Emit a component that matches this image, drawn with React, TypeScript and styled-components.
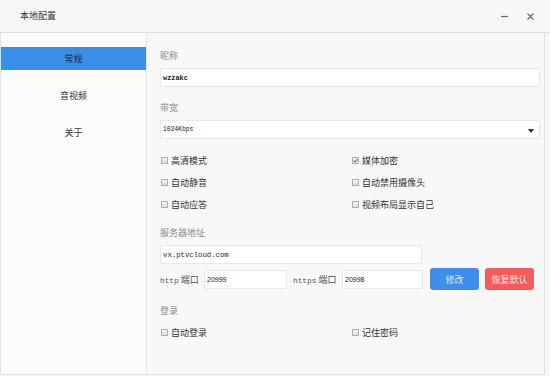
import React from 'react';
import styled, { createGlobalStyle } from 'styled-components';

const Global = createGlobalStyle`
  *, *::before, *::after { box-sizing: border-box; }
  html, body { margin: 0; padding: 0; background: #f7f7f7; }
  body { font-family: "Noto Sans CJK SC", "Liberation Sans", sans-serif; }
`;

const Window = styled.div`
  width: 550px;
  height: 376px;
  display: flex;
  flex-direction: column;
  background: #f7f7f7;
  overflow: hidden;
`;

const TitleBar = styled.div`
  height: 33px;
  flex: none;
  border-bottom: 1px solid #e0e0e0;
  display: flex;
  align-items: center;
  justify-content: space-between;
  padding: 0 16px 0 20px;
  background: #f7f7f7;
`;

const Title = styled.div`
  font-size: 9px;
  color: #333;
  line-height: 12px;
`;

const Controls = styled.div`
  display: flex;
  align-items: center;
  gap: 19px;
  svg { display: block; }
`;

const Body = styled.div`
  width: 545px;
  height: 342px;
  flex: none;
  display: flex;
  border: 1px solid #e2e2e2;
  border-top: none;
`;

const Sidebar = styled.div`
  width: 146px;
  flex: none;
  background: #fcfcfc;
  border-right: 1px solid #e6e6e6;
  padding-top: 14px;
  display: flex;
  flex-direction: column;
  gap: 14px;
`;

const NavItem = styled.div<{ $active?: boolean }>`
  height: 23px;
  line-height: 23px;
  text-align: center;
  font-size: 9px;
  color: ${(p) => (p.$active ? '#1b2a40' : '#333')};
  background: ${(p) => (p.$active ? '#3b8ee8' : 'transparent')};
`;

const Content = styled.div`
  flex: 1;
  background: #f8f8f8;
  padding: 16px 4px 0 13px;
  display: flex;
  flex-direction: column;
`;

const Label = styled.div<{ $mt?: number }>`
  height: 14px;
  line-height: 14px;
  font-size: 9px;
  color: #8a8a8a;
  margin-top: ${(p) => p.$mt ?? 0}px;
  margin-bottom: 5px;
`;

const TextBox = styled.div<{ $width?: number; $size?: number; $bold?: boolean; $sans?: boolean }>`
  height: 19px;
  width: ${(p) => (p.$width ? `${p.$width}px` : '100%')};
  flex: none;
  background: #fff;
  border: 1px solid #e8e8e8;
  border-radius: 2px;
  padding: 0 2px;
  display: flex;
  align-items: center;
  font-family: ${(p) => (p.$sans ? '"Liberation Sans", Arial, sans-serif' : '"Liberation Mono", monospace')};
  font-size: ${(p) => p.$size ?? 7}px;
  font-weight: ${(p) => (p.$bold ? 700 : 400)};
  color: #222;
  position: relative;
`;

const Caret = styled.span`
  position: absolute;
  right: 5px;
  top: 8px;
  width: 0;
  height: 0;
  border-left: 3.5px solid transparent;
  border-right: 3.5px solid transparent;
  border-top: 4px solid #333;
`;

const CheckGrid = styled.div<{ $mt?: number }>`
  display: grid;
  grid-template-columns: 191px 1fr;
  grid-auto-rows: 22px;
  margin-top: ${(p) => p.$mt ?? 0}px;
`;

const CheckItem = styled.label`
  display: flex;
  align-items: center;
  gap: 3px;
  font-size: 9px;
  color: #333;
  padding-left: 1px;
`;

const Box = styled.span`
  width: 7px;
  height: 7px;
  flex: none;
  border: 1px solid #b0b0b0;
  background: linear-gradient(#f6f6f6, #dcdcdc);
  display: flex;
  align-items: center;
  justify-content: center;
  svg { display: block; }
`;

const PortRow = styled.div`
  display: flex;
  align-items: center;
  height: 22px;
  margin-top: 4px;
`;

const PortLabel = styled.div<{ $width: number }>`
  width: ${(p) => p.$width}px;
  flex: none;
  font-size: 9px;
  color: #555;
  white-space: nowrap;
  span { font-family: "Liberation Mono", monospace; font-size: 7.8px; }
`;

const Spacer = styled.div<{ $w: number }>`
  width: ${(p) => p.$w}px;
  flex: none;
`;

const Button = styled.div<{ $tone: 'blue' | 'red' }>`
  width: 49px;
  height: 22px;
  flex: none;
  border-radius: 3px;
  display: flex;
  align-items: center;
  justify-content: center;
  font-size: 9px;
  background: ${(p) => (p.$tone === 'blue' ? '#3e8eea' : '#f45d5d')};
  color: ${(p) => (p.$tone === 'blue' ? '#dfeafb' : '#fde6e6')};
`;

const Check = ({ label, checked }: { label: string; checked?: boolean }) => (
  <CheckItem>
    <Box>
      {checked && (
        <svg width="5" height="5" viewBox="0 0 5 5">
          <path d="M0.6 2.6 L2 4 L4.5 0.8" fill="none" stroke="#2c3e70" strokeWidth="0.9" />
        </svg>
      )}
    </Box>
    {label}
  </CheckItem>
);

export default function App() {
  return (
    <>
      <Global />
      <Window>
        <TitleBar>
          <Title>本地配置</Title>
          <Controls>
            <svg width="7" height="7" viewBox="0 0 7 7">
              <path d="M0 3.5 H7" stroke="#666" strokeWidth="1.2" />
            </svg>
            <svg width="7" height="7" viewBox="0 0 7 7">
              <path d="M0.5 0.5 L6.5 6.5 M6.5 0.5 L0.5 6.5" stroke="#666" strokeWidth="1.1" />
            </svg>
          </Controls>
        </TitleBar>
        <Body>
          <Sidebar>
            <NavItem $active>常规</NavItem>
            <NavItem>音视频</NavItem>
            <NavItem>关于</NavItem>
          </Sidebar>
          <Content>
            <Label>昵称</Label>
            <TextBox $size={6.9} $bold>wzzakc</TextBox>
            <Label $mt={14}>带宽</Label>
            <TextBox $size={6.3}>
              1024Kbps
              <Caret />
            </TextBox>
            <CheckGrid $mt={10}>
              <Check label="高清模式" />
              <Check label="媒体加密" checked />
              <Check label="自动静音" />
              <Check label="自动禁用摄像头" />
              <Check label="自动应答" />
              <Check label="视频布局显示自己" />
            </CheckGrid>
            <Label $mt={11}>服务器地址</Label>
            <TextBox $width={262} $size={7.3}>vx.ptvcloud.com</TextBox>
            <PortRow>
              <PortLabel $width={44}>
                <span>http</span> 端口
              </PortLabel>
              <TextBox $width={83} $size={7} $sans>20999</TextBox>
              <Spacer $w={6} />
              <PortLabel $width={49}>
                <span>https</span> 端口
              </PortLabel>
              <TextBox $width={81} $size={7} $sans>20998</TextBox>
              <Spacer $w={7} />
              <Button $tone="blue">修改</Button>
              <Spacer $w={6} />
              <Button $tone="red">恢复默认</Button>
            </PortRow>
            <Label $mt={14}>登录</Label>
            <CheckGrid $mt={-2}>
              <Check label="自动登录" />
              <Check label="记住密码" />
            </CheckGrid>
          </Content>
        </Body>
      </Window>
    </>
  );
}
